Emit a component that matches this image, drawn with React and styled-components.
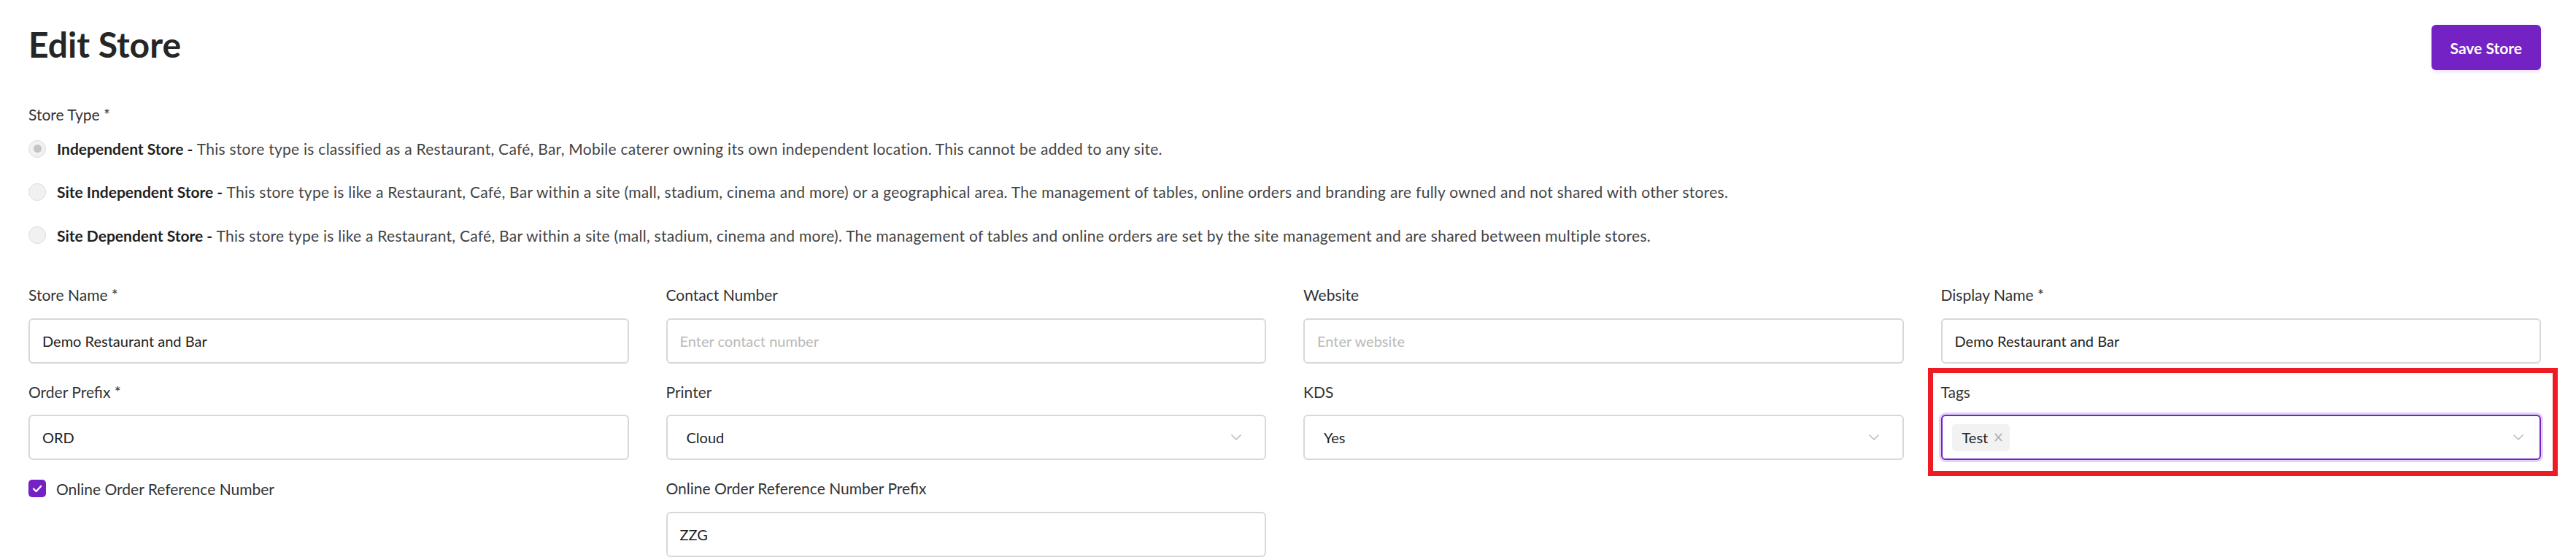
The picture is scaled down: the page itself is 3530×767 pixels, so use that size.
import React from 'react';
import styled, { createGlobalStyle } from 'styled-components';

const colors = {
  purple: '#7522c5',
  purpleGlow: '#e2d3f6',
  text: '#222222',
  muted: '#444444',
  border: '#d8d8d8',
  placeholder: '#b9b9b9',
  annotation: '#ed1c24',
};

const GlobalStyle = createGlobalStyle`
  html, body {
    margin: 0;
    padding: 0;
    background: #ffffff;
  }
  body {
    font-family: Lato, "Noto Sans", "Liberation Sans", sans-serif;
    color: ${colors.text};
  }
  * {
    box-sizing: border-box;
  }
`;

const Page = styled.div`
  padding: 32px 48px 0 39px;
  width: 3530px;
`;

const Header = styled.div`
  display: flex;
  justify-content: space-between;
  align-items: flex-start;
`;

const Title = styled.h1`
  margin: 0;
  font-size: 48px;
  line-height: 57.6px;
  font-weight: 700;
  color: #262626;
`;

const SaveButton = styled.button`
  margin-top: 2px;
  height: 62px;
  padding: 0 26px;
  border: none;
  border-radius: 6px;
  background: ${colors.purple};
  color: #ffffff;
  font-family: inherit;
  font-size: 21px;
  font-weight: 700;
  box-shadow: 0 3px 4px rgba(117, 34, 197, 0.12);
  cursor: pointer;
`;

const FieldLabel = styled.div`
  font-size: 21px;
  line-height: 25.2px;
  color: #333333;
  margin-top: ${({ $top }) => $top || 0}px;
`;

const RadioList = styled.div`
  margin-top: 22px;
  display: flex;
  flex-direction: column;
  gap: 34px;
`;

const RadioRow = styled.label`
  display: flex;
  align-items: center;
  gap: 15px;
  font-size: 21px;
  line-height: 25.2px;
  color: ${colors.muted};
  white-space: nowrap;
`;

const RadioDot = styled.span`
  flex: none;
  width: 24px;
  height: 24px;
  border-radius: 50%;
  border: 1.5px solid #dcdcdc;
  background: #f1f1f1;
  display: flex;
  align-items: center;
  justify-content: center;

  &::after {
    content: '';
    width: 11px;
    height: 11px;
    border-radius: 50%;
    background: ${({ $checked }) => ($checked ? '#c4c4c4' : 'transparent')};
  }
`;

const Strong = styled.b`
  font-weight: 700;
  color: #1f1f1f;
`;

const Description = styled.span`
  letter-spacing: 0.26px;
`;

const FormGrid = styled.div`
  margin-top: 56px;
  display: grid;
  grid-template-columns: repeat(4, 1fr);
  column-gap: 51px;
  row-gap: 26px;
`;

const Field = styled.div`
  position: relative;
  display: flex;
  flex-direction: column;
  gap: 19.5px;

  ${({ $highlight }) =>
    $highlight &&
    `
    &::after {
      content: '';
      position: absolute;
      top: -20px;
      left: -18px;
      right: -23px;
      bottom: -22px;
      border: 7px solid ${colors.annotation};
      pointer-events: none;
    }
  `}
`;

const TextInput = styled.input`
  height: 62px;
  width: 100%;
  padding: 0 17px;
  border: 2px solid ${colors.border};
  border-radius: 6px;
  font-family: inherit;
  font-size: 20px;
  color: ${colors.text};
  background: #ffffff;
  outline: none;

  &::placeholder {
    color: ${colors.placeholder};
  }
`;

const SelectBox = styled.div`
  height: 62px;
  display: flex;
  align-items: center;
  justify-content: space-between;
  padding: ${({ $focused }) => ($focused ? '0 22px 0 13px' : '0 32px 0 26px')};
  border: 2px solid ${({ $focused }) => ($focused ? colors.purple : colors.border)};
  border-radius: 6px;
  box-shadow: ${({ $focused }) => ($focused ? `0 0 0 3px ${colors.purpleGlow}` : 'none')};
  font-size: 20px;
  color: ${colors.text};
  background: #ffffff;
`;

const TagList = styled.div`
  display: flex;
  align-items: center;
  gap: 8px;
`;

const Tag = styled.span`
  display: inline-flex;
  align-items: center;
  gap: 9px;
  height: 37px;
  padding: 0 10px 0 14px;
  border-radius: 5px;
  background: #f2f2f2;
  font-size: 20px;
  color: ${colors.text};
`;

const CheckRow = styled.label`
  display: flex;
  align-items: center;
  gap: 14px;
  height: 26px;
  font-size: 21px;
  color: #333333;
`;

const CheckBox = styled.span`
  flex: none;
  width: 24px;
  height: 24px;
  border-radius: 5px;
  background: ${colors.purple};
  display: flex;
  align-items: center;
  justify-content: center;
`;

const Chevron = () => (
  <svg width="14" height="8" viewBox="0 0 14 8" fill="none">
    <polyline points="1,1 7,7 13,1" stroke="#bdbdbd" strokeWidth="1.6" strokeLinecap="round" strokeLinejoin="round" />
  </svg>
);

const CloseIcon = () => (
  <svg width="11" height="12" viewBox="0 0 11 12" fill="none">
    <line x1="1" y1="1" x2="10" y2="11" stroke="#a8a8a8" strokeWidth="1.6" />
    <line x1="10" y1="1" x2="1" y2="11" stroke="#a8a8a8" strokeWidth="1.6" />
  </svg>
);

const CheckIcon = () => (
  <svg width="14" height="11" viewBox="0 0 14 11" fill="none">
    <polyline points="2,5.5 5.5,9 12,2" stroke="#ffffff" strokeWidth="2.4" strokeLinecap="round" strokeLinejoin="round" />
  </svg>
);

const storeTypes = [
  {
    name: 'Independent Store',
    text: 'This store type is classified as a Restaurant, Café, Bar, Mobile caterer owning its own independent location. This cannot be added to any site.',
    checked: true,
  },
  {
    name: 'Site Independent Store',
    text: 'This store type is like a Restaurant, Café, Bar within a site (mall, stadium, cinema and more) or a geographical area. The management of tables, online orders and branding are fully owned and not shared with other stores.',
  },
  {
    name: 'Site Dependent Store',
    text: 'This store type is like a Restaurant, Café, Bar within a site (mall, stadium, cinema and more). The management of tables and online orders are set by the site management and are shared between multiple stores.',
  },
];

const InputField = ({ label, value, placeholder }) => (
  <Field>
    <FieldLabel>{label}</FieldLabel>
    <TextInput defaultValue={value} placeholder={placeholder} />
  </Field>
);

const SelectField = ({ label, value }) => (
  <Field>
    <FieldLabel>{label}</FieldLabel>
    <SelectBox>
      <span>{value}</span>
      <Chevron />
    </SelectBox>
  </Field>
);

export default function App() {
  return (
    <>
      <GlobalStyle />
      <Page>
        <Header>
          <Title>Edit Store</Title>
          <SaveButton>Save Store</SaveButton>
        </Header>

        <FieldLabel $top={48}>Store Type *</FieldLabel>
        <RadioList>
          {storeTypes.map((type) => (
            <RadioRow key={type.name}>
              <RadioDot $checked={type.checked} />
              <span>
                <Strong>{type.name} -</Strong> <Description>{type.text}</Description>
              </span>
            </RadioRow>
          ))}
        </RadioList>

        <FormGrid>
          <InputField label="Store Name *" value="Demo Restaurant and Bar" />
          <InputField label="Contact Number" placeholder="Enter contact number" />
          <InputField label="Website" placeholder="Enter website" />
          <InputField label="Display Name *" value="Demo Restaurant and Bar" />

          <InputField label="Order Prefix *" value="ORD" />
          <SelectField label="Printer" value="Cloud" />
          <SelectField label="KDS" value="Yes" />
          <Field $highlight>
            <FieldLabel>Tags</FieldLabel>
            <SelectBox $focused>
              <TagList>
                <Tag>
                  Test
                  <CloseIcon />
                </Tag>
              </TagList>
              <Chevron />
            </SelectBox>
          </Field>

          <Field>
            <CheckRow>
              <CheckBox>
                <CheckIcon />
              </CheckBox>
              Online Order Reference Number
            </CheckRow>
          </Field>
          <InputField label="Online Order Reference Number Prefix" value="ZZG" />
        </FormGrid>
      </Page>
    </>
  );
}
